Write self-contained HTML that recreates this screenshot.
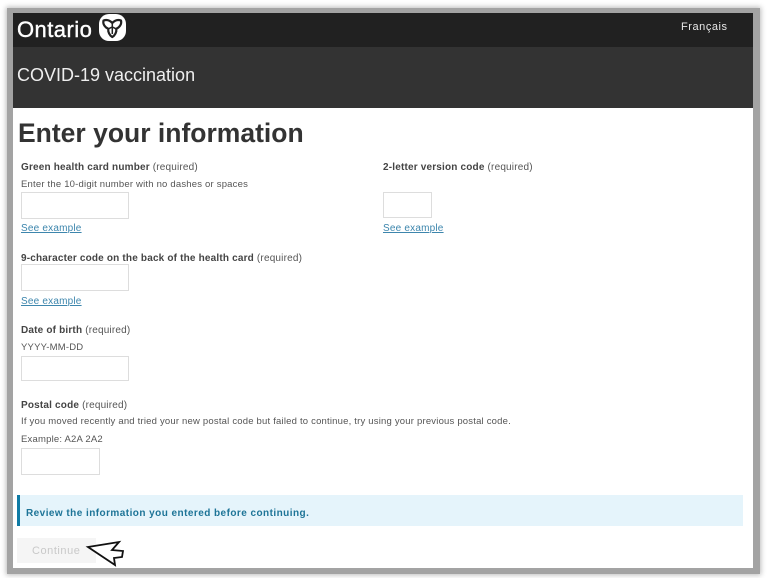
<!DOCTYPE html>
<html><head><meta charset="utf-8"><style>
html,body{margin:0;padding:0;width:768px;height:578px;overflow:hidden;background:#fff;font-family:"Liberation Sans",sans-serif}
.a{position:absolute;white-space:nowrap}
.l{font-size:10px;color:#555;line-height:14px;letter-spacing:.18px}
.l b{color:#444}
.s{font-size:9.5px;color:#555;line-height:14px;letter-spacing:.2px}
.lk{font-size:10px;color:#3d86ad;text-decoration:underline;line-height:14px;letter-spacing:.2px}
.i{position:absolute;background:#fff;border:1px solid #ddd;box-sizing:border-box}
</style></head><body>
<div class="a" style="left:7px;top:8px;width:753px;height:566px;background:#a3a3a3;box-shadow:0 0 5px 1px #bbb"></div>
<div class="a" style="left:13px;top:13px;width:740px;height:555px;background:#fff"></div>
<div class="a" style="left:13px;top:13px;width:740px;height:34px;background:#212121"></div>
<div class="a" style="left:13px;top:47px;width:740px;height:61px;background:#333"></div>
<div class="a" style="left:17px;top:16px;font-size:22px;line-height:27px;color:#fff;letter-spacing:.45px;-webkit-text-stroke:.4px #fff">Ontario</div>
<svg class="a" style="left:99px;top:14px" width="28" height="28" viewBox="0 0 28 28"><rect x="0" y="0" width="27" height="27" rx="10" fill="#fff"/><path d="M4.5 6.5 C8 5.2 11 6.5 13.3 9 C15.6 6.5 18.6 5.2 22 6.5 C23 10 20.5 13.5 17.3 14.8 C17.8 18 16 21.5 13.3 23 C10.6 21.5 8.8 18 9.3 14.8 C6 13.5 3.5 10 4.5 6.5 Z" fill="none" stroke="#212121" stroke-width="2.2" stroke-linejoin="round"/><path d="M13.3 9.5 L13.3 13 M9.5 14.8 L13.3 13 L17 14.8 M13.3 13 L13.3 20" fill="none" stroke="#212121" stroke-width="1.5"/></svg>
<div class="a" style="left:681px;top:20px;font-size:11px;line-height:14px;color:#e8e8e8;letter-spacing:.55px">Français</div>
<div class="a" style="left:17px;top:64px;font-size:18px;line-height:22px;color:#eee">COVID-19 vaccination</div>
<div class="a" style="left:18px;top:117px;font-size:26.5px;line-height:33px;font-weight:700;color:#333">Enter your information</div>

<div class="a l" style="left:21px;top:161px"><b>Green health card number</b> (required)</div>
<div class="a s" style="left:21px;top:178px">Enter the 10-digit number with no dashes or spaces</div>
<div class="i" style="left:21px;top:192px;width:108px;height:27px"></div>
<div class="a lk" style="left:21px;top:222px">See example</div>

<div class="a l" style="left:383px;top:161px"><b>2-letter version code</b> (required)</div>
<div class="i" style="left:383px;top:192px;width:49px;height:26px"></div>
<div class="a lk" style="left:383px;top:222px">See example</div>

<div class="a l" style="left:21px;top:252px"><b>9-character code on the back of the health card</b> (required)</div>
<div class="i" style="left:21px;top:264px;width:108px;height:27px"></div>
<div class="a lk" style="left:21px;top:295px">See example</div>

<div class="a l" style="left:21px;top:324px"><b>Date of birth</b> (required)</div>
<div class="a s" style="left:21px;top:341px">YYYY-MM-DD</div>
<div class="i" style="left:21px;top:356px;width:108px;height:25px"></div>

<div class="a l" style="left:21px;top:399px"><b>Postal code</b> (required)</div>
<div class="a s" style="left:21px;top:415px">If you moved recently and tried your new postal code but failed to continue, try using your previous postal code.</div>
<div class="a s" style="left:21px;top:433px">Example: A2A 2A2</div>
<div class="i" style="left:21px;top:448px;width:79px;height:27px"></div>

<div class="a" style="left:17px;top:495px;width:726px;height:31px;background:#e5f4fb"></div>
<div class="a" style="left:17px;top:495px;width:3px;height:31px;background:#0f7ba5"></div>
<div class="a" style="left:26px;top:507px;font-size:10px;line-height:14px;font-weight:700;color:#1d7497;letter-spacing:.45px">Review the information you entered before continuing.</div>

<div class="a" style="left:17px;top:538px;width:79px;height:25px;background:#f5f5f5"></div>
<div class="a" style="left:32px;top:544px;font-size:11px;line-height:14px;color:#c9c9c9;letter-spacing:.55px">Continue</div>
<svg class="a" style="left:85px;top:538px" width="40" height="30" viewBox="0 0 40 30"><path d="M3 9 L34 4 L27 12 L38 13 L37 19 L29 20 L30 27 Z" fill="#fff" stroke="#111" stroke-width="1.8" stroke-linejoin="miter"/></svg>
</body></html>
